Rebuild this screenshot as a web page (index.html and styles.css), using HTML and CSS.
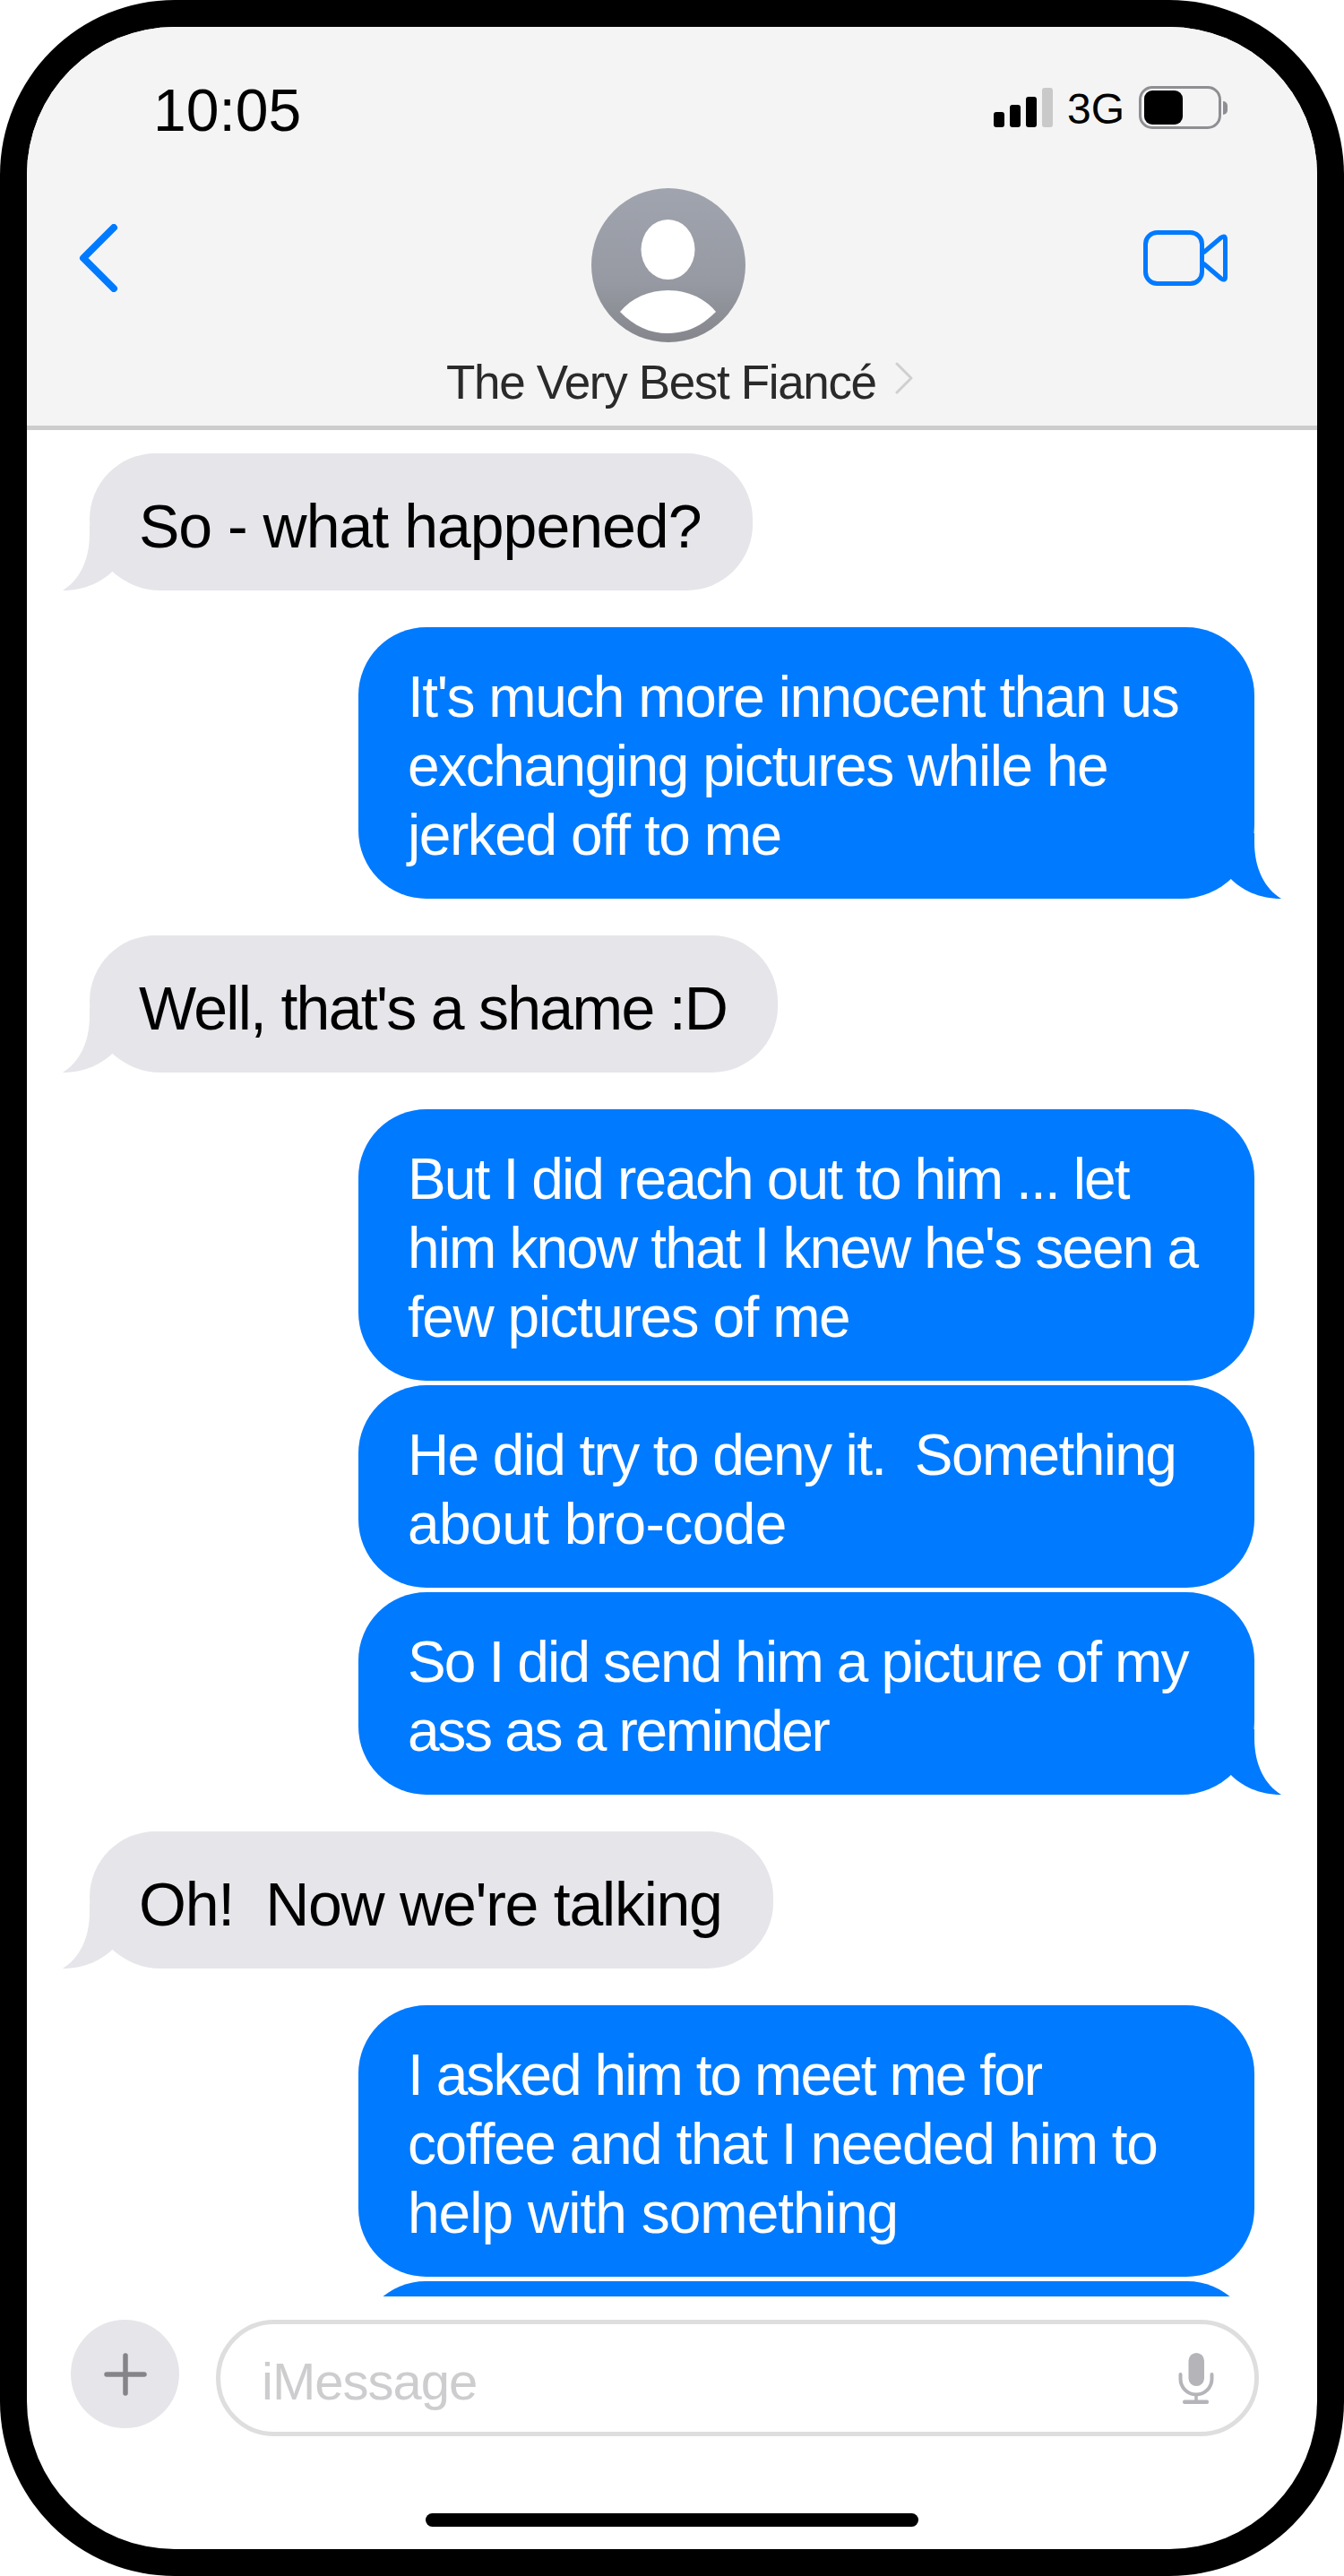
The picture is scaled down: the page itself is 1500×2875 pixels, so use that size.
FILE: index.html
```html
<!DOCTYPE html>
<html lang="en">
<head>
<meta charset="utf-8">
<title>Messages</title>
<link rel="stylesheet" href="styles.css">
</head>
<body>
<div class="phone">
  <div class="screen">
    <header class="header">
      <div class="status">
        <span class="time">10:05</span>
        <div class="status-icons">
          <div class="signal">
            <i class="bar bar-1"></i><i class="bar bar-2"></i><i class="bar bar-3"></i><i class="bar bar-4"></i>
          </div>
          <span class="network">3G</span>
          <div class="battery"><div class="battery-fill"></div></div>
          <div class="battery-tip"></div>
        </div>
      </div>
      <nav class="nav">
        <svg class="back" width="44" height="76" viewBox="0 0 44 76"><path d="M39 4 L5 38 L39 72" fill="none" stroke="#007aff" stroke-width="8" stroke-linecap="round" stroke-linejoin="round"/></svg>
        <div class="contact">
          <svg class="avatar" width="172" height="172" viewBox="0 0 172 172">
            <defs><linearGradient id="avatarGrad" x1="0" y1="0" x2="0" y2="1"><stop offset="0" stop-color="#a0a4ae"/><stop offset="0.6" stop-color="#979aa3"/><stop offset="1" stop-color="#85868c"/></linearGradient></defs>
            <circle cx="86" cy="86" r="86" fill="url(#avatarGrad)"/>
            <ellipse cx="85.500" cy="68.500" rx="30" ry="33.500" fill="#fff"/>
            <path d="M32 138 C45 122 65 114 85.500 114 C106 114 126 122 139 138 C123 154 106 162 85.500 162 C65 162 48 154 32 138Z" fill="#fff"/>
          </svg>
          <div class="name-row">
            <span class="name">The Very Best Fiancé</span>
            <svg class="name-chevron" width="20" height="36" viewBox="0 0 20 36"><path d="M2 2 L18 18 L2 34" fill="none" stroke="#cfcfcf" stroke-width="3" stroke-linecap="round" stroke-linejoin="round"/></svg>
          </div>
        </div>
        <svg class="video" width="94" height="62" viewBox="0 0 94 62"><rect x="2.500" y="2.500" width="63" height="57" rx="13" fill="none" stroke="#007aff" stroke-width="5"/><path d="M67 25 L87 8 Q91.500 5 91.500 10 V52 Q91.500 57 87 54 L67 37" fill="none" stroke="#007aff" stroke-width="5" stroke-linejoin="round"/></svg>
      </nav>
    </header>
    <main class="messages">
      <div class="bubble in tail">So - what happened?</div>
      <div class="bubble out tail">It's much more innocent than us<br>exchanging pictures while he<br>jerked off to me</div>
      <div class="bubble in tail snug">Well, that's a shame :D</div>
      <div class="bubble out"><span class="tighter">But I did reach out to him ... let</span><br><span class="tighter">him know that I knew he's seen a</span><br>few pictures of me</div>
      <div class="bubble out tight"><span class="tight-some">He did try to deny it.  Something</span><br><span class="looser">about bro-code</span></div>
      <div class="bubble out tight tail"><span class="tighter">So I did send him a picture of my</span><br><span class="tightest">ass as a reminder</span></div>
      <div class="bubble in tail slim">Oh!  Now we're talking</div>
      <div class="bubble out"><span class="tightest-some">I asked him to meet me for</span><br>coffee and that I needed him to<br><span class="loose">help with something</span></div>
      <div class="bubble out tight cut"></div>
    </main>
    <footer class="footer">
      <div class="composer">
        <div class="plus">
          <svg width="48" height="48" viewBox="0 0 48 48"><path d="M24 3 V45 M3 24 H45" fill="none" stroke="#858589" stroke-width="5.500" stroke-linecap="round"/></svg>
        </div>
        <div class="input">
          <span class="placeholder">iMessage</span>
          <svg class="mic" width="40" height="57" viewBox="0 0 40 57"><rect x="11.500" y="0" width="17.500" height="37" rx="8.750" fill="#b4b4b9"/><path d="M2.500 24 V29 a17.500 17.500 0 0 0 35 0 V24" fill="none" stroke="#b4b4b9" stroke-width="4" stroke-linecap="round"/><path d="M20 46 V54" stroke="#b4b4b9" stroke-width="3.500"/><rect x="5" y="52.500" width="29" height="4.500" rx="2" fill="#b4b4b9"/></svg>
        </div>
      </div>
      <div class="home-bar"></div>
    </footer>
  </div>
</div>
</body>
</html>
```
FILE: styles.css
```css
* { box-sizing: border-box; }
html, body { margin: 0; padding: 0; background: #fff; }
body { font-family: "Liberation Sans", Arial, sans-serif; }

.phone {
  width: 1500px;
  height: 2875px;
  padding: 30px;
  background: #000;
  border-radius: 195px;
}
.screen {
  width: 1440px;
  height: 2815px;
  display: flex;
  flex-direction: column;
  background: #fff;
  border-radius: 165px;
  overflow: hidden;
}

/* Header */
.header {
  height: 450px;
  flex: none;
  background: #f4f4f4;
  border-bottom: 5px solid #cdcdcd;
}
.status {
  height: 180px;
  display: flex;
  justify-content: space-between;
  align-items: flex-start;
  padding: 62px 100px 0 141px;
}
.time { font-size: 66px; line-height: 62px; color: #000; }
.status-icons { display: flex; align-items: flex-start; margin-top: 4px; }
.signal { display: flex; align-items: flex-end; gap: 6px; height: 44px; margin-top: 2px; }
.bar { display: block; width: 12px; background: #000; border-radius: 3px; }
.bar-1 { height: 17px; }
.bar-2 { height: 25px; }
.bar-3 { height: 34px; }
.bar-4 { height: 44px; background: #c9c9c9; }
.network {
  font-size: 48px;
  line-height: 44px;
  color: #000;
  margin: 4px 16px 0 16px;
}
.battery {
  width: 92px;
  height: 48px;
  padding: 2px 3px;
  border: 3px solid #8e8e93;
  border-radius: 15px;
}
.battery-fill { width: 43px; height: 38px; background: #000; border-radius: 9px; }
.battery-tip {
  width: 5px;
  height: 15px;
  margin: 17px 0 0 2px;
  background: #8e8e93;
  border-radius: 0 5px 5px 0;
}
.nav {
  display: flex;
  align-items: flex-start;
  padding: 0 100px 0 58px;
}
.back { flex: none; margin-top: 40px; }
.contact {
  width: 521px;
  margin-left: 366px;
  display: flex;
  flex-direction: column;
}
.avatar { display: block; margin-left: 162px; }
.name-row { display: flex; align-items: flex-start; margin-top: 14px; }
.name { font-size: 53px; line-height: 62px; letter-spacing: -1.35px; color: #2a2a2a; white-space: nowrap; }
.name-chevron { flex: none; margin-left: auto; margin-top: 8px; }
.video { flex: none; margin: 47px 0 0 auto; }

/* Messages */
.messages {
  flex: 1;
  min-height: 0;
  display: flex;
  flex-direction: column;
  gap: 41px;
  padding: 26px 70px 0;
  overflow: hidden;
}
.bubble {
  position: relative;
  flex: none;
  line-height: 77px;
  border-radius: 76px;
  white-space: pre;
}
.bubble.in {
  align-self: flex-start;
  padding: 43px 57px 33px 55px;
  font-size: 68px;
  letter-spacing: -1px;
  background: #e5e5ea;
  color: #000;
}
.bubble.in.snug { letter-spacing: -1.72px; }
.bubble.in.slim { letter-spacing: -1.25px; }
.bubble.out {
  align-self: flex-end;
  width: 1000px;
  padding: 40px 55px 32px;
  font-size: 64px;
  letter-spacing: -1.45px;
  background: #007aff;
  color: #fff;
}
.tight-some { letter-spacing: -1.62px; }
.tighter { letter-spacing: -1.86px; }
.tightest-some { letter-spacing: -1.94px; }
.tightest { letter-spacing: -2.3px; }
.loose { letter-spacing: -0.97px; }
.looser { letter-spacing: -0.55px; }
.bubble.tight { margin-top: -36px; }
.bubble.cut { min-height: 150px; }
.bubble.out.tail { border-bottom-right-radius: 82px; }
.bubble.in.tail { border-bottom-left-radius: 82px; }
.bubble.tail::after {
  content: "";
  position: absolute;
  bottom: 0;
  width: 70px;
  height: 103px;
  background: inherit;
  clip-path: path("M13 80 C25 93 45 103 70 103 C52 92 40 70 40 40 L40 30 L0 30 L0 75 Z");
}
.bubble.out.tail::after { right: -30px; }
.bubble.in.tail::after { left: -30px; transform: scaleX(-1); }

/* Footer */
.footer {
  height: 282px;
  flex: none;
  display: flex;
  flex-direction: column;
  padding: 26px 0 25px;
}
.composer { display: flex; align-items: flex-start; gap: 41px; padding: 0 65px 0 49px; }
.plus {
  flex: none;
  width: 121px;
  height: 121px;
  display: flex;
  align-items: center;
  justify-content: center;
  background: #e5e5ea;
  border-radius: 50%;
}
.plus svg { display: block; }
.input {
  flex: 1;
  height: 130px;
  display: flex;
  align-items: center;
  justify-content: space-between;
  padding: 0 45px 0 46px;
  border: 5px solid #dedede;
  border-radius: 65px;
}
.placeholder { font-size: 58px; line-height: 62px; letter-spacing: -1px; color: #cdcdcf; padding-top: 8px; }
.mic { flex: none; display: block; }
.home-bar {
  width: 550px;
  height: 15px;
  margin: auto auto 0;
  background: #000;
  border-radius: 8px;
}
```
